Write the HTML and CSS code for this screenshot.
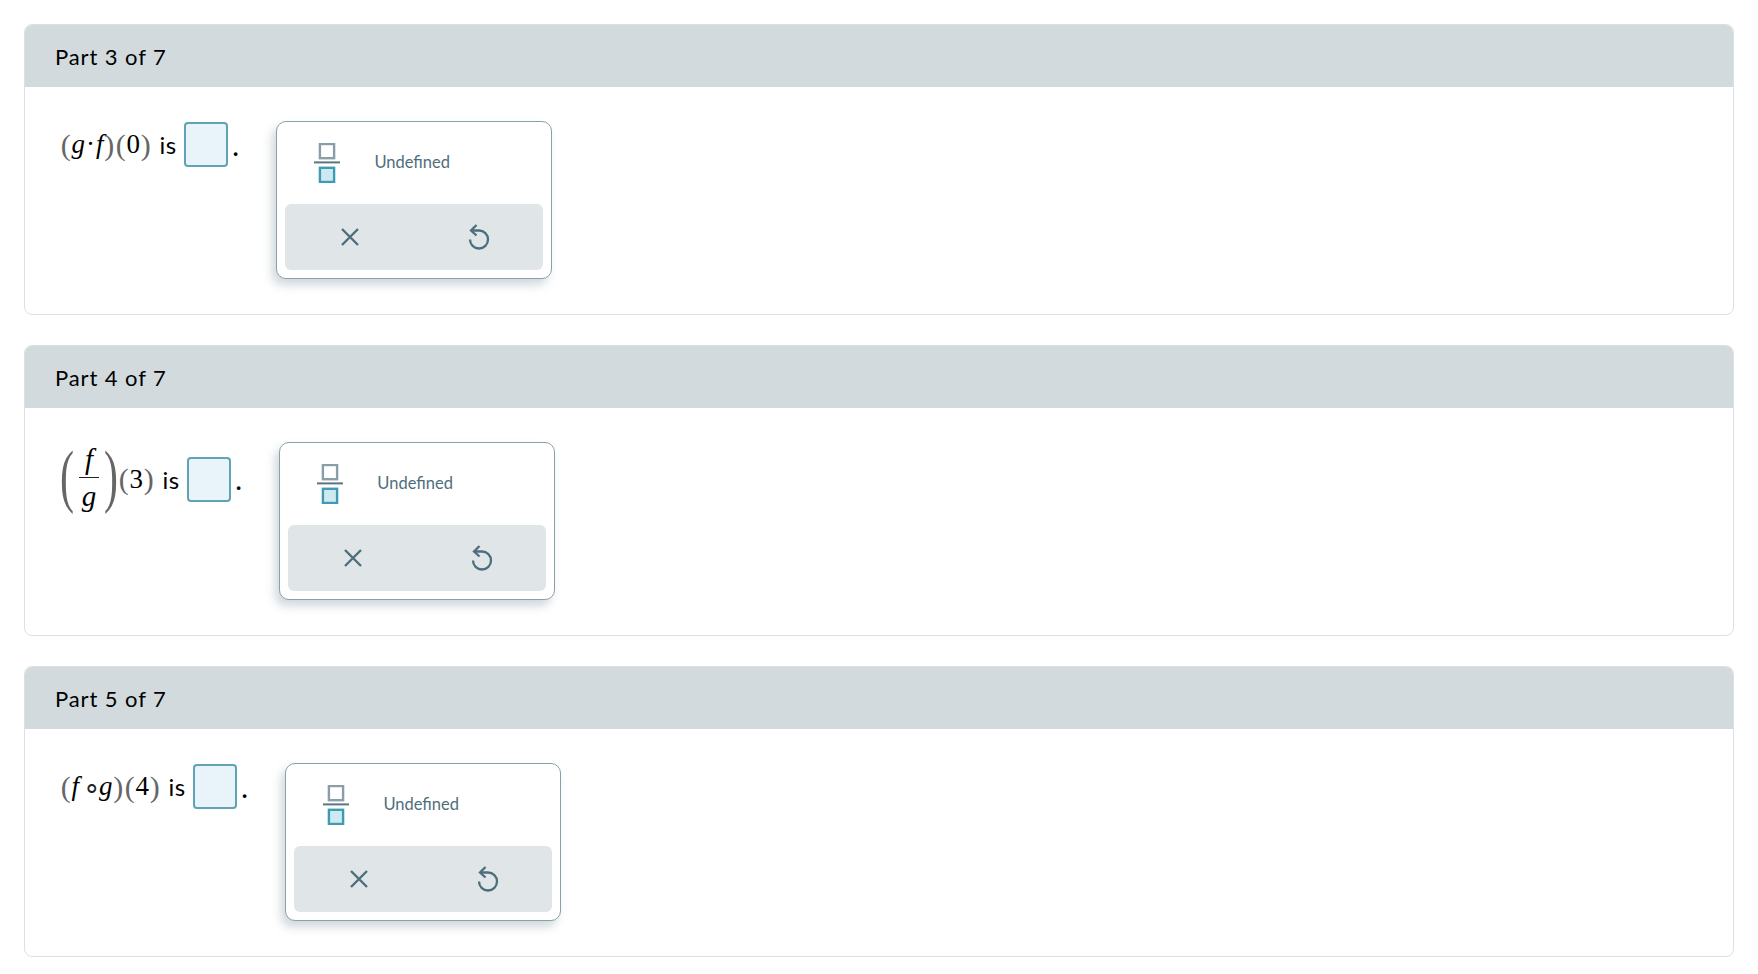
FILE: index.html
```html
<!DOCTYPE html>
<html lang="en">
<head>
<meta charset="utf-8">
<title>Parts</title>
<link rel="stylesheet" href="styles.css">
</head>
<body>
<svg class="defs" width="0" height="0" aria-hidden="true">
  <symbol id="frac" viewBox="0 0 26 40">
    <rect x="5.9" y="1" width="14.2" height="14.2" fill="#fff" stroke="#8a9ea7" stroke-width="2.4"/>
    <rect x="0" y="18.4" width="26" height="2" fill="#5a7583"/>
    <rect x="5.9" y="24.8" width="14.2" height="14.2" fill="#cfe9f1" stroke="#3f9bb5" stroke-width="2.4"/>
  </symbol>
  <symbol id="times" viewBox="0 0 20 20">
    <path d="M2 2 18 18M18 2 2 18" fill="none" stroke="#4d6e7c" stroke-width="2.4"/>
  </symbol>
  <symbol id="undo" viewBox="0 0 22 26">
    <path d="M3.5 6.5H11A9 9 0 1 1 2 15.5" fill="none" stroke="#4d6e7c" stroke-width="2.3"/>
    <path d="M8.5 1 3 6.5l5.5 5" fill="none" stroke="#4d6e7c" stroke-width="2.3"/>
  </symbol>
</svg>
<main class="page">
  <section class="card">
    <h2 class="card-head">Part 3 of 7</h2>
    <div class="card-body">
      <p class="expr">
        <span class="math"><span class="par">(</span><i>g</i><span class="dot">·</span><i>f</i><span class="par">)</span><span class="par">(</span>0<span class="par">)</span></span>
        <span class="word">is</span>
        <span class="answer"></span>
        <span class="period">.</span>
      </p>
      <div class="pad">
        <div class="pad-top">
          <svg class="ico-frac"><use href="#frac"/></svg>
          <span class="undef">Undefined</span>
        </div>
        <div class="pad-actions">
          <svg class="ico-x"><use href="#times"/></svg>
          <svg class="ico-undo"><use href="#undo"/></svg>
        </div>
      </div>
    </div>
  </section>
  <section class="card">
    <h2 class="card-head">Part 4 of 7</h2>
    <div class="card-body">
      <p class="expr">
        <span class="math math-frac">
          <span class="bigpar">(</span>
          <span class="frac"><i class="num">f</i><i class="den">g</i></span>
          <span class="bigpar">)</span>
          <span class="par">(</span>3<span class="par">)</span>
        </span>
        <span class="word">is</span>
        <span class="answer"></span>
        <span class="period">.</span>
      </p>
      <div class="pad">
        <div class="pad-top">
          <svg class="ico-frac"><use href="#frac"/></svg>
          <span class="undef">Undefined</span>
        </div>
        <div class="pad-actions">
          <svg class="ico-x"><use href="#times"/></svg>
          <svg class="ico-undo"><use href="#undo"/></svg>
        </div>
      </div>
    </div>
  </section>
  <section class="card">
    <h2 class="card-head">Part 5 of 7</h2>
    <div class="card-body">
      <p class="expr">
        <span class="math"><span class="par">(</span><i class="f-gap">f</i><span class="ring">∘</span><i>g</i><span class="par">)</span><span class="par">(</span>4<span class="par">)</span></span>
        <span class="word">is</span>
        <span class="answer"></span>
        <span class="period">.</span>
      </p>
      <div class="pad">
        <div class="pad-top">
          <svg class="ico-frac"><use href="#frac"/></svg>
          <span class="undef">Undefined</span>
        </div>
        <div class="pad-actions">
          <svg class="ico-x"><use href="#times"/></svg>
          <svg class="ico-undo"><use href="#undo"/></svg>
        </div>
      </div>
    </div>
  </section>
</main>
</body>
</html>
```
FILE: styles.css
```css
* { box-sizing: border-box; }
html, body { margin: 0; background: #fff; }
body { font-family: "Lato", "Liberation Sans", sans-serif; color: #000; }
.defs { position: absolute; }
.page {
  display: flex;
  flex-direction: column;
  gap: 30px;
  padding: 24px 24px 0;
}
.card {
  height: 291px;
  border: 1.5px solid #dbe1e3;
  border-radius: 8px;
  overflow: hidden;
}
.card-head {
  margin: 0;
  height: 62px;
  padding: 0 0 0 30px;
  display: flex;
  align-items: center;
  background: #d3dadd;
  font-size: 22px;
  font-weight: 400;
  letter-spacing: .9px;
}
.card-body {
  display: flex;
  align-items: flex-start;
  padding: 35px 0 0 35px;
}
.expr {
  margin: 0;
  display: flex;
  align-items: center;
  font-size: 24px;
}
.math {
  font-family: "Liberation Serif", serif;
  font-size: 27px;
  display: flex;
  align-items: center;
}
.par { color: #666; font-size: 30px; padding: 0 .75px; }
.dot { margin: 0 1px; }
.f-gap { margin-right: 4px; }
.ring { font-size: 28px; margin-right: -2px; color: #222; }
.word { margin-left: 8px; letter-spacing: .5px; }
.answer {
  width: 44px;
  height: 45px;
  margin-left: 7px;
  background: #e8f4f9;
  border: 2px solid #5fa3b5;
  border-radius: 4px;
}
.period { margin-left: 5px; padding-top: 3px; font-weight: 700; }
.math-frac { height: 72px; }
.bigpar {
  color: #666;
  font-size: 70px;
  font-weight: 400;
  line-height: 72px;
  transform: translateY(-3px) scaleX(.6);
  width: 14px;
  display: flex;
  justify-content: center;
}
.frac {
  display: flex;
  flex-direction: column;
  align-items: center;
  width: 30px;
  margin-top: -2px;
  font-size: 29px;
  line-height: 35px;
}
.num { border-bottom: 1px solid #222; width: 20px; text-align: center; }
.den { line-height: 37px; }
.pad {
  width: 276px;
  height: 158px;
  margin-left: 38px;
  margin-top: -1px;
  padding: 0 8px;
  background: #fff;
  border: 1px solid #8ca0aa;
  border-radius: 10px;
  box-shadow: -4px 6px 10px rgba(70, 100, 115, .25);
}
.pad-top {
  display: flex;
  align-items: center;
  height: 82px;
  padding: 0 0 0 29px;
}
.ico-frac { width: 26px; height: 40px; }
.undef { margin: 0 0 3px 34px; font-size: 16.5px; color: #4f6e7d; }
.pad-actions {
  display: grid;
  grid-template-columns: 1fr 1fr;
  justify-items: center;
  align-items: center;
  height: 66px;
  background: #e0e5e7;
  border-radius: 6px;
}
.ico-x { width: 20px; height: 20px; }
.ico-undo { width: 22px; height: 26px; }
```
